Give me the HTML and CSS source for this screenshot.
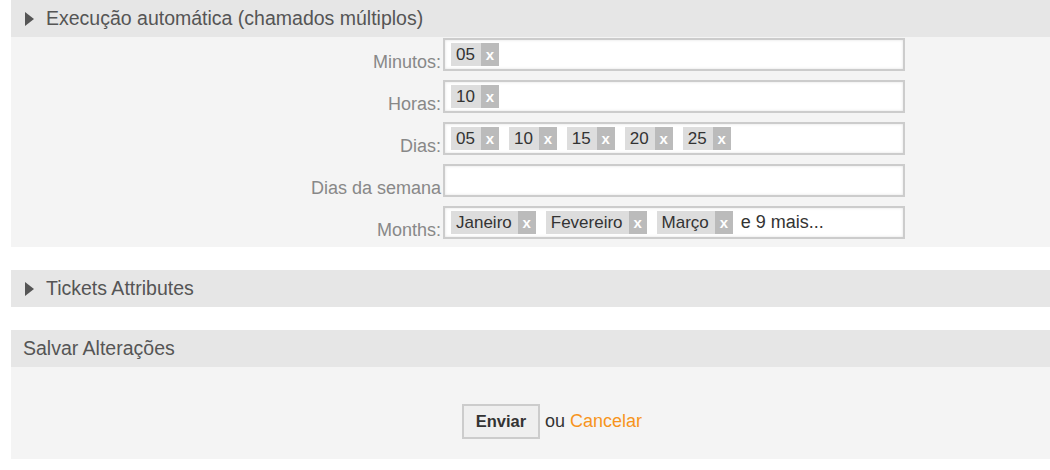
FILE: index.html
```html
<!DOCTYPE html>
<html lang="pt-BR">
<head>
    <meta charset="UTF-8">
    <title>Execução automática</title>
    <link rel="stylesheet" href="styles.css">
</head>
<body>
    <div class="widget">
        <div class="header"><span class="arrow"></span>Execução automática (chamados múltiplos)</div>
        <div class="content fields">
            <div class="row">
                <label>Minutos:</label>
                <div class="field">
                    <span class="tag"><span class="txt">05</span><span class="rm">x</span></span>
                </div>
            </div>
            <div class="row">
                <label>Horas:</label>
                <div class="field">
                    <span class="tag"><span class="txt">10</span><span class="rm">x</span></span>
                </div>
            </div>
            <div class="row">
                <label>Dias:</label>
                <div class="field">
                    <span class="tag"><span class="txt">05</span><span class="rm">x</span></span>
                    <span class="tag"><span class="txt">10</span><span class="rm">x</span></span>
                    <span class="tag"><span class="txt">15</span><span class="rm">x</span></span>
                    <span class="tag"><span class="txt">20</span><span class="rm">x</span></span>
                    <span class="tag"><span class="txt">25</span><span class="rm">x</span></span>
                </div>
            </div>
            <div class="row">
                <label>Dias da semana</label>
                <div class="field"></div>
            </div>
            <div class="row">
                <label>Months:</label>
                <div class="field">
                    <span class="tag"><span class="txt">Janeiro</span><span class="rm">x</span></span>
                    <span class="tag"><span class="txt">Fevereiro</span><span class="rm">x</span></span>
                    <span class="tag"><span class="txt">Março</span><span class="rm">x</span></span>
                    <span class="more">e 9 mais...</span>
                </div>
            </div>
        </div>
    </div>

    <div class="widget">
        <div class="header"><span class="arrow"></span>Tickets Attributes</div>
    </div>

    <div class="widget">
        <div class="header plain">Salvar Alterações</div>
        <div class="content actions">
            <button>Enviar</button>
            <span class="or">ou</span>
            <a href="#">Cancelar</a>
        </div>
    </div>
</body>
</html>
```

FILE: styles.css
```css
body {
    margin: 0;
    padding: 0 0 0 11px;
    font-family: 'Liberation Sans', Arial, sans-serif;
    background: white;
    color: #333;
}
.widget {
    margin-bottom: 23px;
}
.header {
    background: #e6e6e6;
    color: #555;
    font-size: 19.5px;
    height: 37px;
    padding-left: 14px;
    display: flex;
    align-items: center;
}
.header.plain {
    padding-left: 12px;
}
.arrow {
    width: 0;
    height: 0;
    border-top: 7px solid transparent;
    border-bottom: 7px solid transparent;
    border-left: 9px solid #555;
    margin-right: 12px;
}
.content {
    background: #f4f4f4;
}
.fields {
    padding: 1px 0 8px;
    display: flex;
    flex-direction: column;
    gap: 9px;
}
.row {
    display: flex;
    height: 33px;
}
.row label {
    width: 430px;
    text-align: right;
    color: #888;
    font-size: 18px;
    line-height: 20px;
    padding-top: 14px;
    box-sizing: border-box;
    white-space: nowrap;
}
.field {
    width: 462px;
    height: 33px;
    margin-left: 2px;
    box-sizing: border-box;
    background: white;
    border: 2px solid #ccc;
    box-shadow: inset 0 0 3px rgba(0,0,0,0.12);
    padding: 3px 0 0 6px;
    display: flex;
    align-items: flex-start;
    gap: 10px;
}
.tag {
    display: flex;
    height: 23px;
    line-height: 23px;
    font-size: 17px;
}
.tag .txt {
    background: #ddd;
    color: #333;
    padding: 0 6px 0 5px;
}
.tag .rm {
    background: #bbb;
    color: white;
    width: 18px;
    text-align: center;
    font-weight: bold;
    font-size: 15px;
}
.more {
    font-size: 18px;
    line-height: 23px;
    color: #333;
    margin-left: -2px;
}
.actions {
    padding: 37px 0 20px 451px;
    display: flex;
    align-items: center;
    font-size: 18px;
}
.actions button {
    width: 78px;
    height: 35px;
    background: #efefef;
    border: 2px solid #ccc;
    font-family: inherit;
    font-weight: bold;
    font-size: 16.5px;
    color: #333;
    cursor: pointer;
}
.or {
    margin: 0 5px;
    color: #333;
}
.actions a {
    color: #f7941d;
    text-decoration: none;
}
```
